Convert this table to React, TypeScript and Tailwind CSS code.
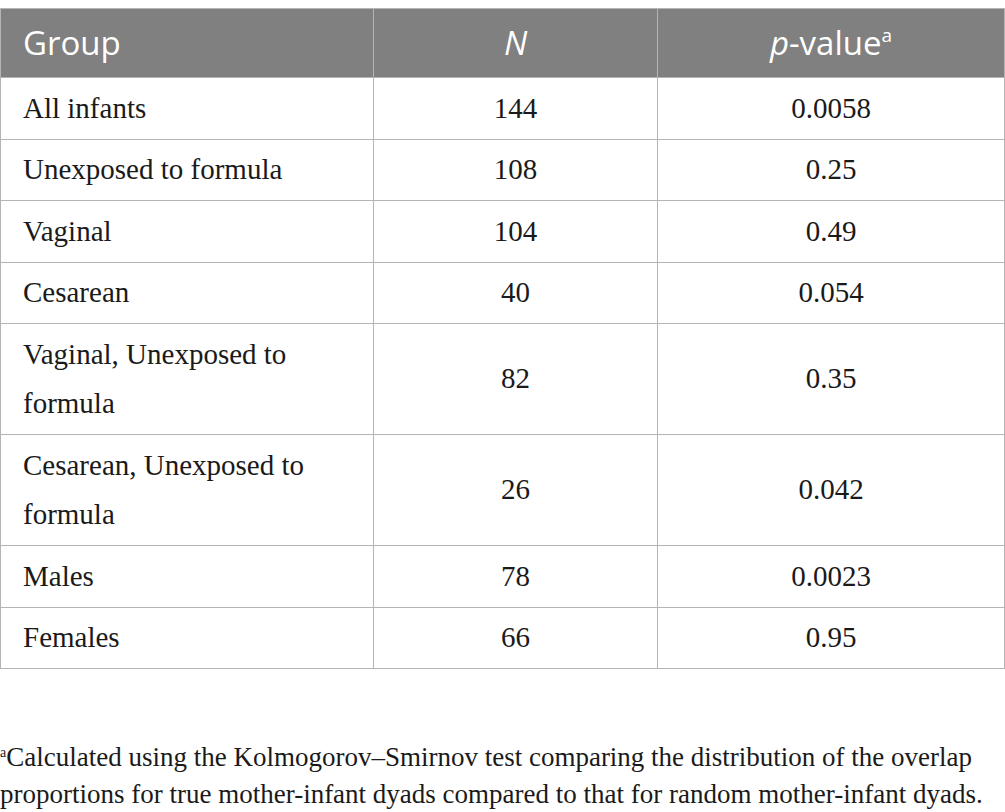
const rows: { group: string; n: string; p: string }[] = [
  { group: "All infants", n: "144", p: "0.0058" },
  { group: "Unexposed to formula", n: "108", p: "0.25" },
  { group: "Vaginal", n: "104", p: "0.49" },
  { group: "Cesarean", n: "40", p: "0.054" },
  { group: "Vaginal, Unexposed to formula", n: "82", p: "0.35" },
  { group: "Cesarean, Unexposed to formula", n: "26", p: "0.042" },
  { group: "Males", n: "78", p: "0.0023" },
  { group: "Females", n: "66", p: "0.95" },
];

function App() {
  return (
    <div className="w-[1005px] bg-white pt-[8px] text-[#1a1a1a]">
      <table className="w-[1005px] table-fixed border-collapse">
        <colgroup>
          <col className="w-[373px]" />
          <col className="w-[284px]" />
          <col />
        </colgroup>
        <thead>
          <tr className="bg-[#7f807f] font-['Open_Sans',sans-serif] text-[33px] font-normal text-white">
            <th className="h-[69px] border border-[#b4b4b4] px-[22px] text-left font-normal">
              Group
            </th>
            <th className="border border-[#b4b4b4] text-center font-normal italic">N</th>
            <th className="border border-[#b4b4b4] text-center font-normal">
              <span className="italic">p</span>-value
              <sup className="relative -top-[13px] text-[19px]">a</sup>
            </th>
          </tr>
        </thead>
        <tbody className="font-['Liberation_Serif',serif] text-[29px] leading-[49.5px]">
          {rows.map((row) => (
            <tr key={row.group}>
              <td className="border border-[#b4b4b4] px-[22px] py-[5.5px] pr-[40px]">
                {row.group}
              </td>
              <td className="border border-[#b4b4b4] py-[5.5px] text-center">{row.n}</td>
              <td className="border border-[#b4b4b4] py-[5.5px] text-center">{row.p}</td>
            </tr>
          ))}
        </tbody>
      </table>
      <p className="mt-[70px] font-['Liberation_Serif',serif] text-[27px] leading-[37px]">
        <sup className="relative -top-[9px] text-[14px]">a</sup>
        Calculated using the Kolmogorov–Smirnov test comparing the distribution of the overlap
        <br />
        proportions for true mother-infant dyads compared to that for random mother-infant dyads.
      </p>
    </div>
  );
}

export default App;
